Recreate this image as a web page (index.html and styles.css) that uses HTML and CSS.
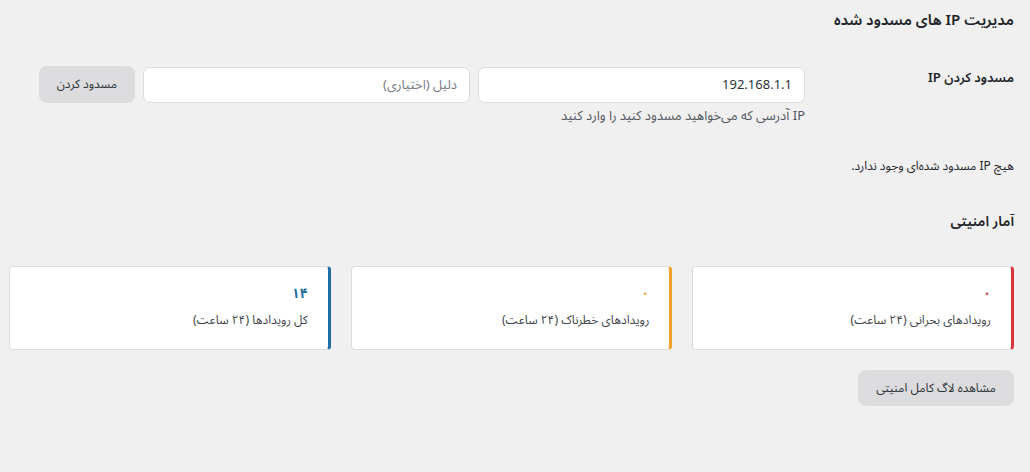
FILE: index.html
```html
<!DOCTYPE html>
<html lang="fa" dir="rtl">
<head>
    <meta charset="utf-8">
    <title>مدیریت IP های مسدود شده</title>
    <link rel="stylesheet" href="styles.css">
</head>
<body>
    <div class="wrap">
        <h1>مدیریت IP های مسدود شده</h1>

        <div class="form-row">
            <div class="form-label">مسدود کردن IP</div>
            <div class="form-field">
                <div class="field-line">
                    <input type="text" class="ip-input" value="192.168.1.1">
                    <input type="text" class="reason-input" placeholder="دلیل (اختیاری)">
                    <button class="btn">مسدود کردن</button>
                </div>
                <p class="description">IP آدرسی که می‌خواهید مسدود کنید را وارد کنید</p>
            </div>
        </div>

        <p class="empty">هیچ IP مسدود شده‌ای وجود ندارد.</p>

        <h2>آمار امنیتی</h2>

        <div class="stats">
            <div class="stat-card critical">
                <div class="stat-num">۰</div>
                <div class="stat-label">رویدادهای بحرانی (۲۴ ساعت)</div>
            </div>
            <div class="stat-card high">
                <div class="stat-num">۰</div>
                <div class="stat-label">رویدادهای خطرناک (۲۴ ساعت)</div>
            </div>
            <div class="stat-card total">
                <div class="stat-num">۱۴</div>
                <div class="stat-label">کل رویدادها (۲۴ ساعت)</div>
            </div>
        </div>

        <div class="actions">
            <button class="btn btn-wide">مشاهده لاگ کامل امنیتی</button>
        </div>
    </div>
</body>
</html>
```

FILE: styles.css
```css
body {
    margin: 0;
    background: #f0f0f1;
    color: #1d2327;
    font-family: "Noto Sans Arabic", "Noto Sans", "DejaVu Sans", sans-serif;
    font-size: 13px;
}
.wrap {
    padding: 8px 16px 0 9px;
}
h1 {
    margin: 0;
    font-size: 15px;
    font-weight: 600;
    line-height: 24px;
}
.form-row {
    display: flex;
    margin-top: 14px;
    padding: 20px 0;
}
.form-label {
    width: 209px;
    flex-shrink: 0;
    font-size: 13px;
    font-weight: 600;
    line-height: 24px;
}
.field-line {
    display: flex;
    gap: 8px;
    align-items: center;
}
input {
    box-sizing: border-box;
    width: 327px;
    height: 36px;
    padding: 0 12px;
    border: 1px solid #dcdcde;
    border-radius: 7px;
    background: #fff;
    font-family: inherit;
    font-size: 13px;
    color: #2c3338;
}
input::placeholder {
    color: #787c82;
}
.btn {
    height: 37px;
    padding: 0 18px;
    border: none;
    border-radius: 8px;
    background: #dcdcde;
    color: #2c3338;
    font-family: inherit;
    font-size: 12px;
    cursor: pointer;
}
.description {
    margin: 3px 0 0;
    line-height: 20px;
    color: #50575e;
}
.empty {
    margin: 11px 0 0;
    line-height: 20px;
    font-size: 12px;
}
h2 {
    margin: 33px 0 0;
    font-size: 14px;
    font-weight: 600;
    line-height: 24px;
}
.stats {
    display: grid;
    grid-template-columns: repeat(3, 1fr);
    gap: 20px;
    margin-top: 32px;
}
.stat-card {
    height: 84px;
    box-sizing: border-box;
    padding: 18px 20px 0;
    background: #fff;
    border: 1px solid #dcdcde;
    border-right: 3px solid #d63638;
    border-radius: 4px;
}
.stat-card.high {
    border-right-color: #f0a22a;
}
.stat-card.total {
    border-right-color: #1f6e9f;
}
.stat-num {
    font-size: 14px;
    font-weight: 700;
    line-height: 18px;
    color: #d63638;
}
.high .stat-num {
    color: #f0a22a;
}
.total .stat-num {
    color: #1f6e9f;
}
.stat-label {
    margin-top: 8px;
    line-height: 20px;
    font-size: 12px;
    color: #3c434a;
}
.actions {
    margin-top: 20px;
}
.btn-wide {
    width: 156px;
    height: 36px;
    padding: 0;
}
```
